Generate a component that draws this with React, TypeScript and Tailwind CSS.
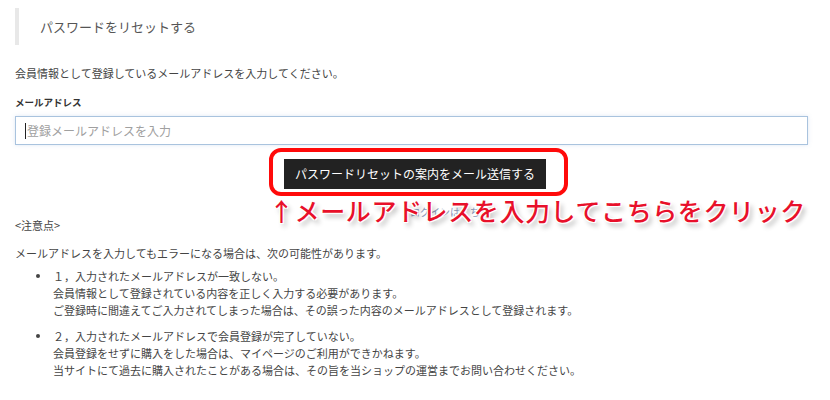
export default function App() {
  return (
    <main className="w-[830px] h-[400px] overflow-hidden bg-white px-[15px] pt-[8px] text-[#444] font-['Noto_Sans_CJK_JP','Noto_Sans',sans-serif] text-[11px]">

      {/* Heading */}
      <div className="h-[37px] border-l-4 border-[#e8e8e8] pl-[21px] flex items-center text-[13px] text-[#555]">
        パスワードをリセットする
      </div>

      <p className="mt-[20px] leading-[17px]">
        会員情報として登録しているメールアドレスを入力してください。
      </p>

      <label className="block mt-[12px] leading-[17px] text-[9.5px] font-bold text-[#333]">
        メールアドレス
      </label>

      {/* Email field */}
      <div className="relative mt-[5px]">
        <input
          type="text"
          placeholder="登録メールアドレスを入力"
          className="w-[793px] h-[29px] border border-[#a9c3de] bg-white pl-[11px] text-[12px] placeholder:text-[#a0a0a0] outline-none shadow-[0_0_4px_rgba(120,160,210,0.25)]"
        />
        <span className="absolute left-[10px] top-[7px] w-px h-[16px] bg-[#222]" />
      </div>

      {/* Submit */}
      <div className="mt-[14px] flex justify-center">
        <div className="relative">
          <button className="h-[30px] px-[11px] bg-[#222] text-white text-[12px] whitespace-nowrap">
            パスワードリセットの案内をメール送信する
          </button>

          <span className="absolute left-[126px] top-[45px] text-[10px] text-[#8a98b8] whitespace-nowrap">
            ログインはこちら
          </span>

          {/* Annotation */}
          <div className="absolute left-[-15px] top-[-11px] right-[-22px] bottom-[-7px] border-[4px] border-[#ff0a0a] rounded-[12px]" />
          <div className="absolute left-[-15px] top-[39px] whitespace-nowrap text-[25px] leading-none font-medium tracking-[0.6px] text-[#e8102a] [text-shadow:0_0_2px_#fff,1px_1px_0_#fff,-1px_-1px_0_#fff,1px_-1px_0_#fff,-1px_1px_0_#fff,3px_4px_5px_rgba(0,0,0,0.3)]">
            ↑メールアドレスを入力してこちらをクリック
          </div>
        </div>
      </div>

      {/* Notes */}
      <p className="mt-[28px] leading-[17px]">&lt;注意点&gt;</p>

      <p className="mt-[11px] leading-[17px]">
        メールアドレスを入力してもエラーになる場合は、次の可能性があります。
      </p>

      <ul className="mt-[6px] ml-[21px] leading-[17px]">
        <li className="flex">
          <span className="w-[17px] pt-[6px]">
            <span className="block w-[4px] h-[4px] rounded-full bg-[#444]" />
          </span>
          <div>
            <p>１，入力されたメールアドレスが一致しない。</p>
            <p>会員情報として登録されている内容を正しく入力する必要があります。</p>
            <p>ご登録時に間違えてご入力されてしまった場合は、その誤った内容のメールアドレスとして登録されます。</p>
          </div>
        </li>
        <li className="flex mt-[9px]">
          <span className="w-[17px] pt-[6px]">
            <span className="block w-[4px] h-[4px] rounded-full bg-[#444]" />
          </span>
          <div>
            <p>２，入力されたメールアドレスで会員登録が完了していない。</p>
            <p>会員登録をせずに購入をした場合は、マイページのご利用ができかねます。</p>
            <p>当サイトにて過去に購入されたことがある場合は、その旨を当ショップの運営までお問い合わせください。</p>
          </div>
        </li>
      </ul>

    </main>
  );
}
